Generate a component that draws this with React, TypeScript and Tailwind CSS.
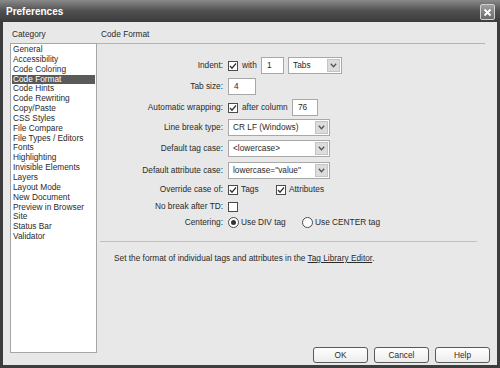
import React from "react";

const font = { fontFamily: '"Liberation Sans", Arial, sans-serif' };

function Check({ checked = false }: { checked?: boolean }) {
  return (
    <span className="w-[10px] h-[10px] border border-[#4a4a4a] bg-white flex items-center justify-center shrink-0">
      {checked && (
        <svg width="8" height="8" viewBox="0 0 8 8">
          <path d="M1 4 L3 6.2 L7 1.5" fill="none" stroke="#333" strokeWidth="1.3" />
        </svg>
      )}
    </span>
  );
}

function Radio({ checked = false }: { checked?: boolean }) {
  return (
    <span className="w-[11px] h-[11px] rounded-full border border-[#4a4a4a] bg-white flex items-center justify-center shrink-0">
      {checked && <span className="w-[5px] h-[5px] rounded-full bg-[#333]" />}
    </span>
  );
}

function Input({ value, w }: { value: string; w: string }) {
  return (
    <span className={`${w} h-[17px] border border-[#a8a8a8] bg-white flex items-center pl-[5px] text-[8.3px] text-[#2a2a2a]`}>
      {value}
    </span>
  );
}

function Select({ value, w }: { value: string; w: string }) {
  return (
    <span className={`${w} h-[17px] border border-[#a8a8a8] bg-white flex items-center text-[8.3px] text-[#2a2a2a]`}>
      <span className="flex-1 pl-[4px] truncate">{value}</span>
      <span className="w-[13px] h-[13px] mr-[1px] bg-[#dcdcdc] border border-[#c4c4c4] flex items-center justify-center">
        <svg width="7" height="5" viewBox="0 0 7 5">
          <path d="M0.8 0.8 L3.5 3.8 L6.2 0.8" fill="none" stroke="#555" strokeWidth="1.3" />
        </svg>
      </span>
    </span>
  );
}

function Row({ label, mt, h = "h-[17px]", children }: { label: string; mt: string; h?: string; children: React.ReactNode }) {
  return (
    <div className={`flex items-center ${h} ${mt}`}>
      <div className="w-[126px] text-right text-[8.3px] text-[#2a2a2a]">{label}</div>
      <div className="flex items-center ml-[5px]">{children}</div>
    </div>
  );
}

function Btn({ label }: { label: string }) {
  return (
    <span className="w-[55px] h-[16px] rounded-[3px] border border-[#5a5a5a] bg-gradient-to-b from-white to-[#ececec] flex items-center justify-center text-[8.3px] text-[#2a2a2a]">
      {label}
    </span>
  );
}

const categories = [
  "General",
  "Accessibility",
  "Code Coloring",
  "Code Format",
  "Code Hints",
  "Code Rewriting",
  "Copy/Paste",
  "CSS Styles",
  "File Compare",
  "File Types / Editors",
  "Fonts",
  "Highlighting",
  "Invisible Elements",
  "Layers",
  "Layout Mode",
  "New Document",
  "Preview in Browser",
  "Site",
  "Status Bar",
  "Validator",
];

export default function App() {
  return (
    <div className="w-[500px] h-[368px] bg-[#3d3d3d] flex flex-col overflow-hidden" style={font}>
      {/* Title bar */}
      <div className="h-[22px] shrink-0 bg-gradient-to-b from-[#8a8a8a] via-[#505050] to-[#3c3c3c] flex items-center justify-between pl-[6px] pr-[5px]">
        <span className="text-white text-[10px] font-bold">Preferences</span>
        <span className="w-[15px] h-[16px] mt-[2px] rounded-[2px] border border-[#d0d0d0] bg-gradient-to-b from-[#a0a0a0] to-[#6a6a6a] flex items-center justify-center">
          <svg width="9" height="9" viewBox="0 0 9 9">
            <path d="M1.5 1.5 L7.5 7.5 M7.5 1.5 L1.5 7.5" stroke="white" strokeWidth="1.8" />
          </svg>
        </span>
      </div>
      {/* Body */}
      <div className="flex-1 mx-[3px] mb-[3px] bg-[#e8e8e8] flex min-h-0">
        {/* Left column */}
        <div className="w-[94px] shrink-0 flex flex-col pl-[7px] pb-[12px]">
          <div className="h-[21px] flex items-end pb-[3px] pl-[2px] text-[8.3px] text-[#2a2a2a]">Category</div>
          <div className="flex-1 w-[87px] bg-white border border-[#a6a6a6] pt-[1px] text-[8.3px] text-[#2a2a2a]">
            {categories.map((c) => (
              <div
                key={c}
                className={
                  c === "Code Format"
                    ? "mx-[1px] pl-[1px] leading-[9.85px] bg-[#5a5a5a] text-white"
                    : "mx-[1px] pl-[1px] leading-[9.85px]"
                }
              >
                {c}
              </div>
            ))}
          </div>
        </div>
        {/* Right column */}
        <div className="flex-1 flex flex-col">
          <div className="h-[21px] flex items-end pb-[3px] pl-[4px] text-[8.3px] text-[#2a2a2a]">Code Format</div>
          <div className="h-[1px] w-[388px] bg-[#b4b4b4]" />
          <div className="flex flex-col">
            <Row label="Indent:" mt="mt-[13px]">
              <Check checked />
              <span className="ml-[4px] text-[8.3px] text-[#2a2a2a] w-[15px]">with</span>
              <span className="ml-[4px]"><Input value="1" w="w-[23px]" /></span>
              <span className="ml-[4px]"><Select value="Tabs" w="w-[54px]" /></span>
            </Row>
            <Row label="Tab size:" mt="mt-[4px]">
              <Input value="4" w="w-[28px]" />
            </Row>
            <Row label="Automatic wrapping:" mt="mt-[4px]">
              <Check checked />
              <span className="ml-[4px] text-[8.3px] text-[#2a2a2a] w-[46px]">after column</span>
              <span className="ml-[4px]"><Input value="76" w="w-[26px]" /></span>
            </Row>
            <Row label="Line break type:" mt="mt-[3px]">
              <Select value="CR LF (Windows)" w="w-[102px]" />
            </Row>
            <Row label="Default tag case:" mt="mt-[4px]">
              <Select value="<lowercase>" w="w-[102px]" />
            </Row>
            <Row label="Default attribute case:" mt="mt-[5px]">
              <Select value={'lowercase="value"'} w="w-[102px]" />
            </Row>
            <Row label="Override case of:" mt="mt-[2px]">
              <Check checked />
              <span className="ml-[3px] text-[8.3px] text-[#2a2a2a] w-[35px]">Tags</span>
              <Check checked />
              <span className="ml-[3px] text-[8.3px] text-[#2a2a2a]">Attributes</span>
            </Row>
            <Row label="No break after TD:" mt="mt-[0px]">
              <Check />
            </Row>
            <Row label="Centering:" mt="mt-[-1px]" h="h-[16px]">
              <Radio checked />
              <span className="ml-[2px] text-[8.3px] text-[#2a2a2a] w-[61px]">Use DIV tag</span>
              <Radio />
              <span className="ml-[2px] text-[8.3px] text-[#2a2a2a]">Use CENTER tag</span>
            </Row>
          </div>
          <div className="mt-[11px] ml-[3px] h-[1px] w-[377px] bg-[#c0c0c0]" />
          <div className="mt-[10px] ml-[17px] text-[8.3px] text-[#2a2a2a]">
            Set the format of individual tags and attributes in the <span className="underline">Tag Library Editor</span>.
          </div>
          <div className="flex-1" />
          <div className="flex justify-end gap-[6px] pr-[7px] pb-[2px]">
            <Btn label="OK" />
            <Btn label="Cancel" />
            <Btn label="Help" />
          </div>
        </div>
      </div>
    </div>
  );
}
